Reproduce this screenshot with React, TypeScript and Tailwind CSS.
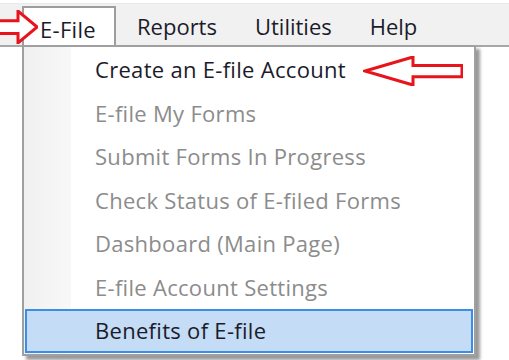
import React from "react";

const items = [
  { label: "Create an E-file Account", enabled: true },
  { label: "E-file My Forms" },
  { label: "Submit Forms In Progress" },
  { label: "Check Status of E-filed Forms" },
  { label: "Dashboard (Main Page)" },
  { label: "E-file Account Settings" },
  { label: "Benefits of E-file", enabled: true, active: true },
];

function OutlineArrow({ className, flip }: { className: string; flip?: boolean }) {
  return (
    <svg
      className={className}
      viewBox="0 0 100 32"
      preserveAspectRatio="none"
      style={flip ? { transform: "scaleX(-1)" } : undefined}
    >
      <polygon
        points="1,10 50,10 50,1 98,16 50,31 50,22 1,22"
        fill="white"
        stroke="#e8141b"
        strokeWidth="3"
        strokeLinejoin="miter"
        vectorEffect="non-scaling-stroke"
      />
    </svg>
  );
}

export default function App() {
  return (
    <div className="relative w-[509px] h-[360px] overflow-hidden bg-white font-['Open_Sans','Noto_Sans',sans-serif] text-[22px] tracking-[0.3px] text-[#1b1b2a]">
      {/* window title remnant */}
      <div className="h-[4px] bg-white border-b border-[#e9e9e9]" />

      {/* menu bar */}
      <div className="flex h-[43px] items-end border-b-2 border-[#a7a7a7] bg-[#f1f1f1]">
        <div className="ml-[22px] -mb-[2px] flex h-[41px] w-[94px] items-center border-x-2 border-t-2 border-[#9d9d9d] bg-white pl-[16px] pt-[3px]">
          E-File
        </div>
        <div className="flex h-[41px] items-center pl-[21px] pt-[3px] tracking-[0px]">
          <span>Reports</span>
          <span className="ml-[38px]">Utilities</span>
          <span className="ml-[38px]">Help</span>
        </div>
      </div>

      {/* dropdown */}
      <div className="absolute left-[22px] top-[45px] w-[454px] h-[311px] border-2 border-[#a0a0a0] bg-white pt-[1px] shadow-[4px_4px_3px_rgba(0,0,0,0.4)]">
        <div className="absolute left-0 top-0 bottom-0 w-[47px] bg-gradient-to-r from-[#f0f0f0] to-[#f8f8f8]" />
        <div className="relative flex flex-col">
          {items.map((it) => (
            <div
              key={it.label}
              className={
                it.active
                  ? "mx-[1px] flex h-[43.5px] items-center border-2 border-[#3b8ee6] bg-[#c4dcf5] pl-[68px] text-[#1b1b2a]"
                  : it.enabled
                  ? "flex h-[43.5px] items-center pl-[71px] text-[#1b1b2a]"
                  : "flex h-[43.5px] items-center pl-[71px] text-[#8c8c8c]"
              }
            >
              {it.label}
            </div>
          ))}
        </div>
      </div>

      {/* annotation arrows */}
      <OutlineArrow className="absolute left-[-2px] top-[10px] w-[40px] h-[34px]" />
      <OutlineArrow className="absolute left-[363px] top-[56px] w-[100px] h-[30px]" flip />
    </div>
  );
}
